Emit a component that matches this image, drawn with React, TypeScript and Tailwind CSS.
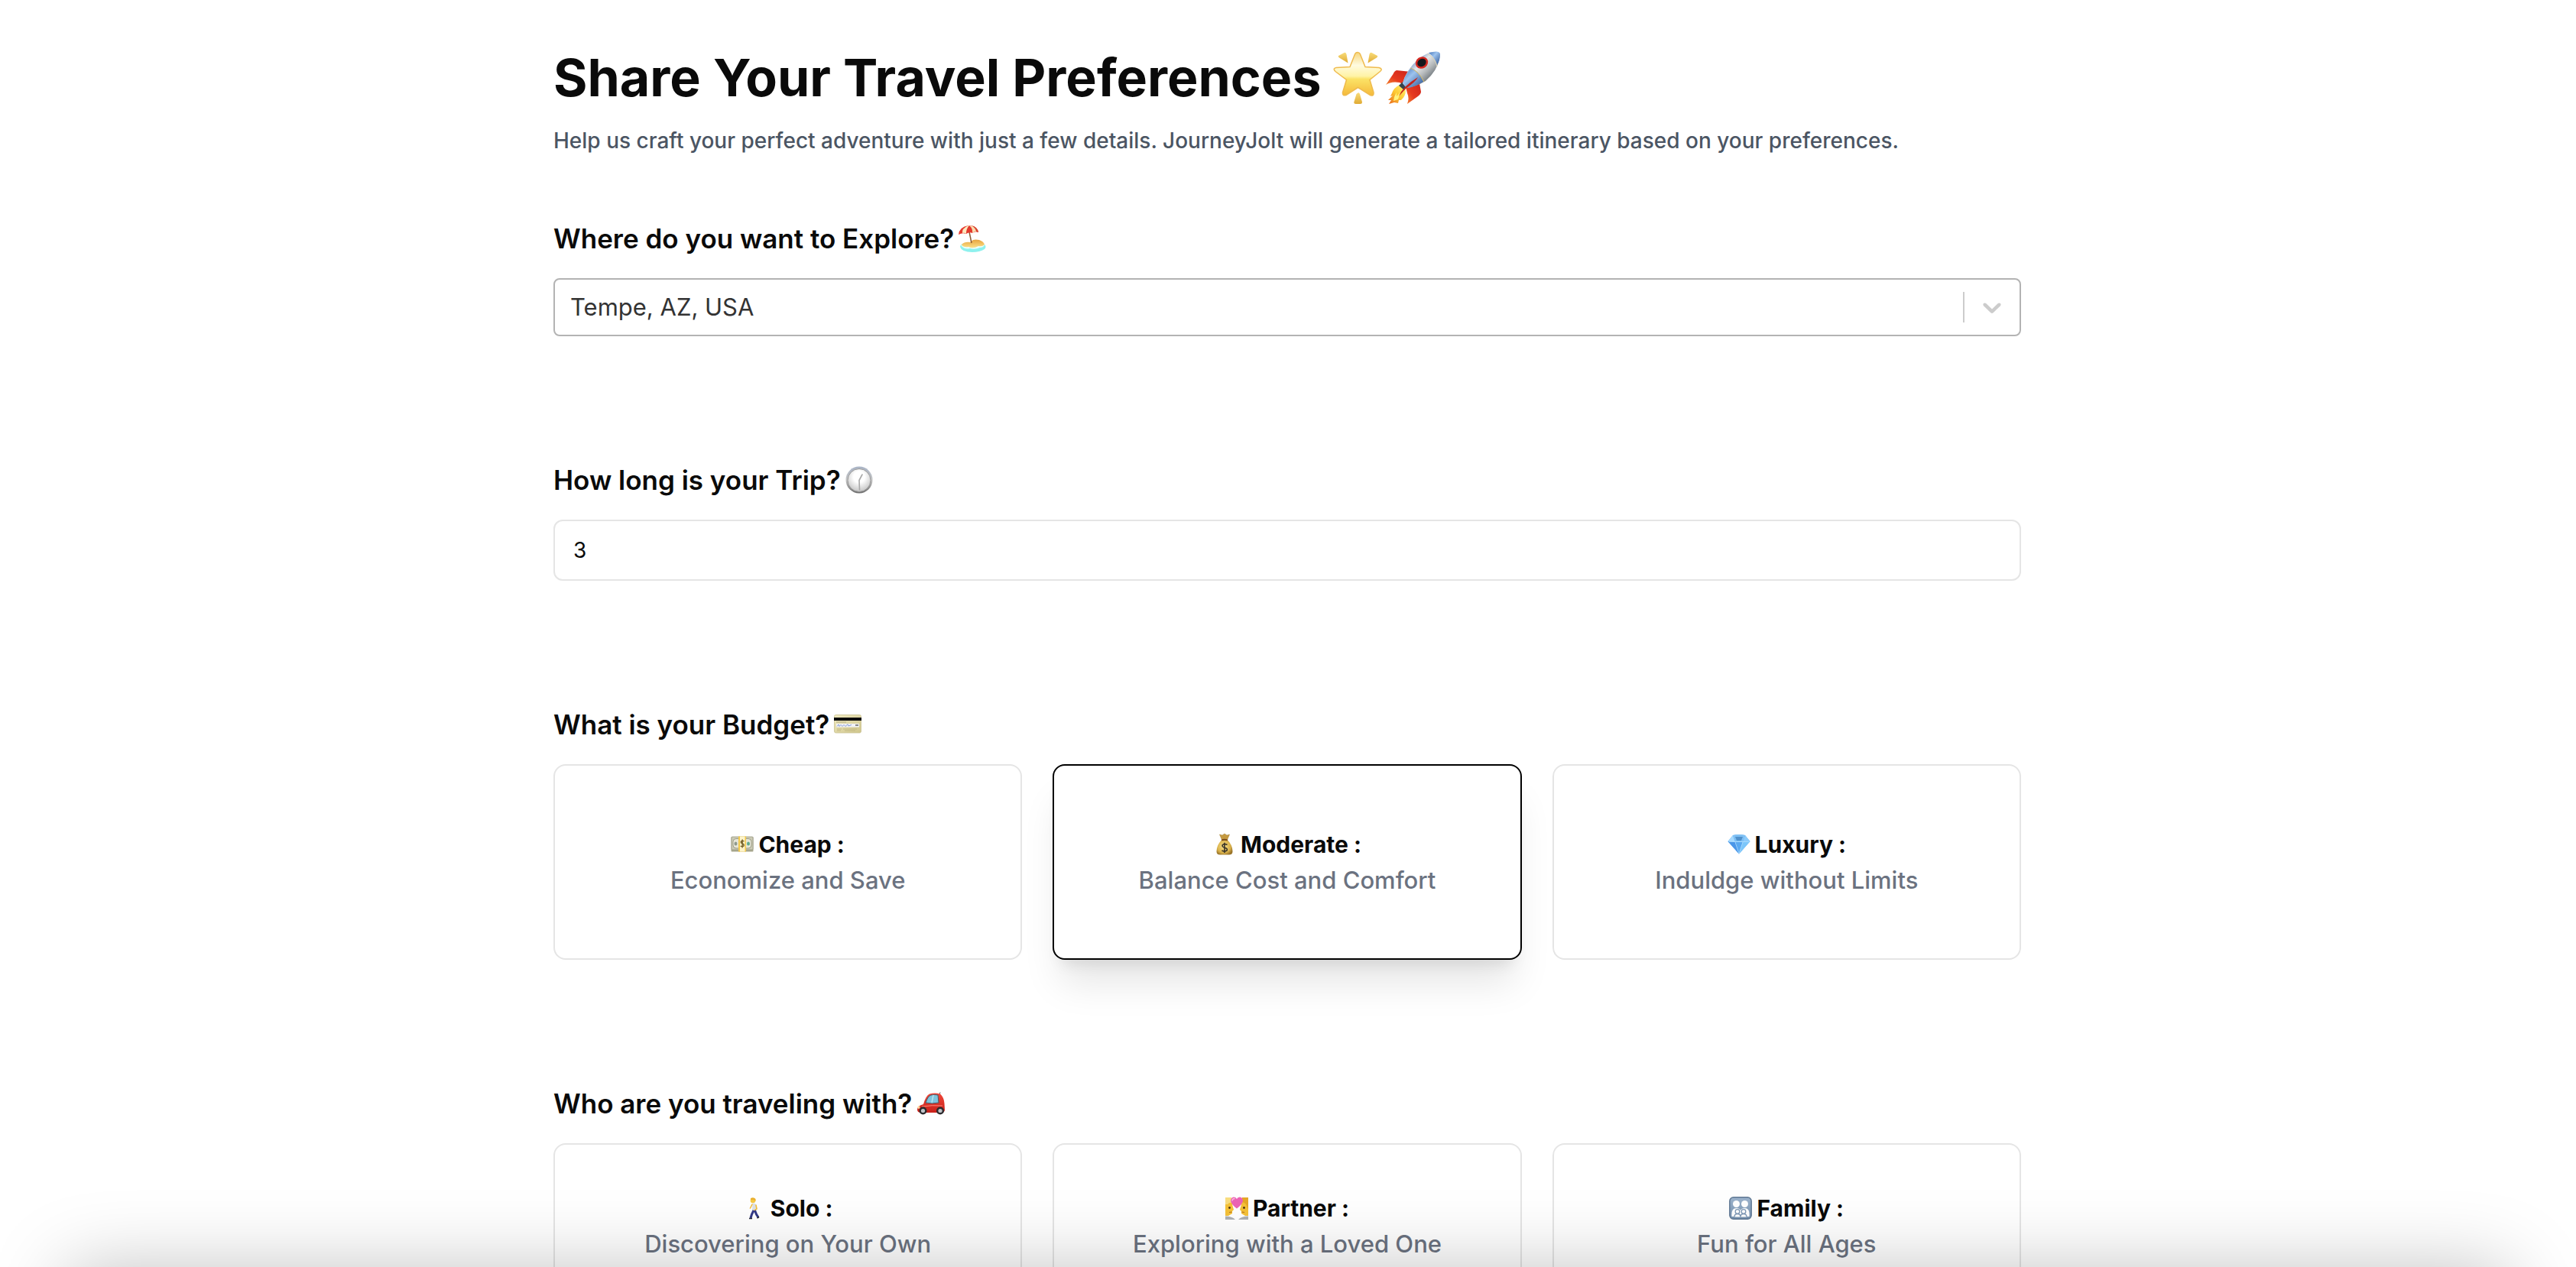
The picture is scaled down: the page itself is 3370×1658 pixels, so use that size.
import { useId, useState } from "react";
import type { ReactNode } from "react";

function Star() {
  return (
    <svg viewBox="0 0 72 72" className="size-[72px]" aria-hidden="true">
      <defs>
        <linearGradient id="star-fill" x1="0" y1="0" x2="0" y2="1">
          <stop offset="0" stopColor="#f6d67c" />
          <stop offset="0.3" stopColor="#fffbe0" />
          <stop offset="0.55" stopColor="#fff3a6" />
          <stop offset="0.62" stopColor="#fbe266" />
          <stop offset="1" stopColor="#f5b93a" />
        </linearGradient>
        <linearGradient id="star-ray" x1="0" y1="0" x2="0" y2="1">
          <stop offset="0" stopColor="#f8dc7a" />
          <stop offset="1" stopColor="#e0aa33" />
        </linearGradient>
      </defs>
      <path
        d="M36 3.500 Q38.500 3.500 39.500 6 L46 22.500 L64 23.500 Q69.500 25 65.500 28.500 L52 39.500 L57 56 Q57.500 61.500 52.500 59.500 L36.500 49.500 L21 59.500 Q16 61 16.500 56 L21.500 39.500 L7 28.500 Q3 24.500 8 23.500 L26 22.500 L32.500 6 Q33.500 3.500 36 3.500 Z"
        fill="url(#star-fill)"
        stroke="#efbb4e"
        strokeWidth="1.500"
      />
      <path d="M18.500 4 Q20.500 3 21.500 6 L23.500 17.500 L12 10.500 Q9.500 8.500 12 7.500 Z" fill="url(#star-ray)" />
      <path d="M54.500 4 Q52.500 3 51.500 6 L49.500 17.500 L61 10.500 Q63.500 8.500 61 7.500 Z" fill="url(#star-ray)" />
      <path d="M36.500 56.500 Q38 55.500 39 58 L42 68.500 Q42 71 39.500 71 L33.500 71 Q30.500 71 31.500 68 L34.500 58 Z" fill="url(#star-ray)" />
    </svg>
  );
}

function Rocket() {
  return (
    <svg viewBox="0 0 72 72" className="size-[72px]" aria-hidden="true">
      <defs>
        <linearGradient id="rocket-body" x1="0.250" y1="0.200" x2="0.800" y2="0.750">
          <stop offset="0" stopColor="#5c83bd" />
          <stop offset="0.350" stopColor="#e6e8ea" />
          <stop offset="0.650" stopColor="#b4b8ba" />
          <stop offset="1" stopColor="#626a70" />
        </linearGradient>
        <linearGradient id="rocket-blue" x1="0" y1="0" x2="1" y2="1">
          <stop offset="0" stopColor="#3f6fb5" />
          <stop offset="0.400" stopColor="#9dc3ee" />
          <stop offset="1" stopColor="#2a5191" />
        </linearGradient>
        <linearGradient id="rocket-fin" x1="1" y1="0" x2="0" y2="1">
          <stop offset="0" stopColor="#c9211a" />
          <stop offset="0.600" stopColor="#e63a20" />
          <stop offset="1" stopColor="#f5892f" />
        </linearGradient>
        <linearGradient id="rocket-flame" x1="1" y1="0" x2="0" y2="1">
          <stop offset="0" stopColor="#fff37a" />
          <stop offset="0.500" stopColor="#fdc931" />
          <stop offset="1" stopColor="#e8641c" />
        </linearGradient>
      </defs>
      <path d="M34 29 L15 27 Q12 28 10.500 32 L1 46 Q8 41 19 43 L25 46 Z" fill="url(#rocket-fin)" />
      <path d="M44 39 L47 55 Q47 58 43 61 L29 71 Q32 63 29 57 L27 49 Z" fill="url(#rocket-fin)" />
      <path d="M19 46 Q11 50 9 57 L7 61 L10 60 L4 66 L8 66 L5 71 L12 69 L17 70 L18 66 L21 66 Q27 61 27 53 Z" fill="url(#rocket-flame)" />
      <path d="M12 62 L15 56 L15 61 L20 56 L17 65 L11 67 Z" fill="#fff27d" />
      <path d="M18 47 L23 42 L29 48 L25 53 Z" fill="#36434d" />
      <path d="M23 44 Q27 27 44 12 Q56 2 68 3 Q73 4 71 12 Q68 28 53 41 Q39 49 28 50 Z" fill="url(#rocket-body)" />
      <path d="M57 4 Q72 0 72 6 Q72 14 68 20 Q66 11 57 4 Z" fill="url(#rocket-blue)" />
      <path d="M23 44 Q25 35 34 24 Q44 27 50 42 Q39 49 28 50 Z" fill="url(#rocket-blue)" />
      <path d="M33 24 Q44 28 51 42" fill="none" stroke="#d8b95e" strokeWidth="1" />
      <path d="M55 5 Q66 11 68 22" fill="none" stroke="#d8d2b4" strokeWidth="1" />
      <ellipse cx="48" cy="17" rx="8.500" ry="7.500" transform="rotate(-35 48 17)" fill="#d42a22" />
      <ellipse cx="48" cy="17" rx="6" ry="5" transform="rotate(-35 48 17)" fill="#15181c" />
      <path d="M43 36 Q40 42 27 51 L18 61 Q23 48 43 36 Z" fill="#c4241b" />
    </svg>
  );
}

function Beach() {
  return (
    <svg viewBox="0 0 36 36" className="size-9" aria-hidden="true">
      <defs>
        <linearGradient id="beach-sand" x1="0" y1="0" x2="0" y2="1">
          <stop offset="0" stopColor="#e8a43c" />
          <stop offset="1" stopColor="#fbe08a" />
        </linearGradient>
      </defs>
      <path d="M2 29 Q2 25 10 24 L34 26 Q37 29 34 32 Q28 36 18 36 Q4 36 2 29 Z" fill="#8ef1ee" />
      <path d="M3 27 Q8 33 15 31 Q22 33 28 30 Q33 30 34 26 L20 22 Z" fill="#eafffb" />
      <path d="M4 26 Q8 22 15 23 Q19 18 27 20 Q33 22 34 26 Q31 29 26 28 Q19 32 13 29 Q6 30 4 26 Z" fill="url(#beach-sand)" />
      <path d="M13.500 7 L17 24" stroke="#8b5a35" strokeWidth="1.500" />
      <path d="M0 13 Q1 3 13 1 Q24 1 26 10 Q22 8 18 11 Q14 9 10 12 Q5 10 0 13 Z" fill="#e5392d" />
      <path d="M13 1 Q4 5 5 11 Q8 10 10 12 Q10 5 14 1 Z" fill="#fbeac0" />
      <path d="M14 1 Q19 5 18 11 Q22 8 24 9 Q22 2 14 1 Z" fill="#f8deb0" />
      <path d="M17 1 Q25 3 26 10 L23 9 Q22 4 17 1 Z" fill="#d8452f" />
    </svg>
  );
}

function Clock() {
  return (
    <svg viewBox="0 0 36 36" className="size-9" aria-hidden="true">
      <defs>
        <linearGradient id="clock-rim" x1="0" y1="0" x2="0" y2="1">
          <stop offset="0" stopColor="#a9b4c6" />
          <stop offset="0.500" stopColor="#c4c4c4" />
          <stop offset="1" stopColor="#6b6b6b" />
        </linearGradient>
        <radialGradient id="clock-face" cx="0.500" cy="0.350" r="0.700">
          <stop offset="0.350" stopColor="#ffffff" />
          <stop offset="1" stopColor="#bdbdbd" />
        </radialGradient>
      </defs>
      <circle cx="18" cy="18" r="17.500" fill="url(#clock-rim)" />
      <circle cx="18" cy="18.500" r="15" fill="url(#clock-face)" stroke="#999999" strokeWidth="1" />
      <path d="M22 11 L18 18.500 L18.500 31" fill="none" stroke="#a8a8a8" strokeWidth="1.600" strokeLinecap="round" strokeLinejoin="round" />
    </svg>
  );
}

function CreditCard() {
  return (
    <svg viewBox="0 0 36 36" className="size-9" aria-hidden="true">
      <defs>
        <linearGradient id="card-fill" x1="0" y1="0" x2="1" y2="1">
          <stop offset="0" stopColor="#f0eac0" />
          <stop offset="1" stopColor="#cfc58b" />
        </linearGradient>
      </defs>
      <rect x="0.500" y="5.500" width="35" height="23.500" rx="2" fill="url(#card-fill)" stroke="#c9c192" strokeWidth="0.800" />
      <rect x="0" y="9" width="36" height="4" fill="#0b0b0b" />
      <path d="M3 15 H16" stroke="#a39d78" strokeWidth="0.800" />
      <rect x="3" y="17" width="30" height="4.500" fill="#f1f2f6" />
      <path d="M4 20.500 L6 18 L7 20.500 L9 18.500 L11 20.500 L13 18.500 L15 20.500 L18 17.800 L19 20 L23 18.500" fill="none" stroke="#7c92cf" strokeWidth="0.900" />
      <path d="M28 19 H32" stroke="#666666" strokeWidth="1.500" />
      <path d="M4 24 H10 M4 26 H9 M12 24 H30 M14 26 H28" stroke="#bdb37c" strokeWidth="0.800" />
    </svg>
  );
}

function Car() {
  return (
    <svg viewBox="0 0 38 36" className="h-9 w-[38px]" aria-hidden="true">
      <defs>
        <linearGradient id="car-body" x1="0" y1="0" x2="0" y2="1">
          <stop offset="0" stopColor="#f0483a" />
          <stop offset="1" stopColor="#c8201a" />
        </linearGradient>
      </defs>
      <path d="M30 6 L31 3.500" stroke="#555555" strokeWidth="1" />
      <path d="M9 19 Q12 8 17 5.500 Q24 3.500 31 5.500 Q36 10 36.500 18 L37 27 Q36 30 33 30 L6 30 Q1 30 1 26 Q1 21 9 19 Z" fill="url(#car-body)" />
      <path d="M12 17 Q15 8 19 7 Q24 6 28 7 L29 17 Q20 19 12 17 Z" fill="#7fc3dc" stroke="#4a5a66" strokeWidth="1" />
      <path d="M22 7 L20 17" stroke="#b7e4f0" strokeWidth="1.500" />
      <path d="M7 22 Q20 20 34 21" fill="none" stroke="#ff8a7a" strokeWidth="1" />
      <ellipse cx="3" cy="23" rx="1.500" ry="2" fill="#ffd9a0" />
      <circle cx="8.500" cy="27.500" r="5" fill="#2b2b2e" />
      <circle cx="8.500" cy="27.500" r="2.600" fill="#bfc3c8" />
      <circle cx="31" cy="27.500" r="5" fill="#2b2b2e" />
      <circle cx="31" cy="27.500" r="2.600" fill="#bfc3c8" />
    </svg>
  );
}

function Banknote() {
  return (
    <svg viewBox="0 0 30 30" className="size-[30px]" aria-hidden="true">
      <rect x="0.500" y="5" width="29" height="19.500" rx="1" fill="#a9a88f" />
      <rect x="1" y="5" width="28" height="17" rx="1" fill="#cccbb6" stroke="#9b9a84" strokeWidth="0.800" />
      <rect x="3" y="7.500" width="24" height="12.500" rx="4" fill="#e6e6d8" stroke="#9f9e88" strokeWidth="1" />
      <ellipse cx="6.500" cy="14" rx="2" ry="2.600" fill="#8f9a8c" />
      <ellipse cx="23" cy="14" rx="2" ry="2.600" fill="#5faa8c" />
      <rect x="10" y="4.500" width="10" height="20" fill="#f3c94a" />
      <rect x="12" y="4.500" width="6.500" height="20" fill="#fdf3c9" />
      <path d="M17.500 11 Q15 9.500 13.500 11 Q12.800 13.200 15.200 14 Q17.800 14.800 17 17 Q15 18.500 12.800 17 M15.200 8.500 V19.500" fill="none" stroke="#75612a" strokeWidth="1.400" />
    </svg>
  );
}

function MoneyBag() {
  return (
    <svg viewBox="0 0 30 30" className="size-[30px]" aria-hidden="true">
      <defs>
        <radialGradient id="bag-fill" cx="0.450" cy="0.450" r="0.600">
          <stop offset="0" stopColor="#f8e088" />
          <stop offset="0.700" stopColor="#d9b14a" />
          <stop offset="1" stopColor="#9a7429" />
        </radialGradient>
      </defs>
      <path d="M8.500 2 L12 3 L15 1 L18 3 L21.500 2 L18.500 9 L11.500 9 Z" fill="#c59a40" stroke="#a07a2c" strokeWidth="0.500" />
      <path d="M11 9.500 Q15 8 19 9.500 Q25 15 25.500 24 Q25.500 28.500 21 28.500 L9 28.500 Q4.500 28.500 4.500 24 Q5 15 11 9.500 Z" fill="url(#bag-fill)" />
      <path d="M11 9.500 Q15 8 19 9.500" fill="none" stroke="#7c4c1c" strokeWidth="1.800" />
      <path d="M18.500 15.500 Q15 13.500 12.500 15.500 Q11 18 15 19.200 Q19.500 20.500 18 23 Q15 25 11.500 23 M15 12.800 V26" fill="none" stroke="#363127" strokeWidth="1.600" />
    </svg>
  );
}

function Gem() {
  return (
    <svg viewBox="0 0 30 30" className="size-[30px]" aria-hidden="true">
      <path d="M7 3 Q15 1 23 3 L29.500 11 L15 27.500 L0.500 11 Z" fill="#68b4f4" />
      <path d="M7 3 L10 12 L0.500 11 Z" fill="#a6daff" />
      <path d="M23 3 L20 12 L29.500 11 Z" fill="#8bcbfb" />
      <path d="M7 3 Q15 1 23 3 L20 12 H10 Z" fill="#7fc0f4" />
      <path d="M10 5 L20 5 L18 10 L12 10 Z" fill="#4f91cc" />
      <path d="M10 12 H20 L15 27.500 Z" fill="#5aa9f0" />
      <path d="M0.500 11 L10 12 L15 27.500 Z" fill="#4a96e8" />
      <path d="M20 12 L29.500 11 L15 27.500 Z" fill="#7cc6fa" />
      <path d="M2 11.500 H28 M10 12 L15 27 L20 12" fill="none" stroke="#b8e3ff" strokeWidth="0.700" />
    </svg>
  );
}

function Walker() {
  return (
    <svg viewBox="0 0 30 30" className="size-[30px]" aria-hidden="true">
      <circle cx="13" cy="5" r="3.300" fill="#f7c944" />
      <path d="M10 2 Q14 0 16.500 3 L16.500 6 L14 4 L10 4 Z" fill="#eab02f" />
      <path d="M12.500 8.500 Q17 8 17.500 12 L17.500 18.500 L12 18.500 Z" fill="#dbe1e8" />
      <path d="M12 10 L9.500 15 M17 11 L18 16 L15 18" fill="none" stroke="#f3bd3b" strokeWidth="1.600" strokeLinecap="round" />
      <path d="M14 18 L11.500 23 L10 28 M15.500 18 L17.500 23 L20 27" fill="none" stroke="#333a87" strokeWidth="3" />
      <path d="M8 28.500 H12 M18.500 28 L21 26.500" stroke="#232632" strokeWidth="1.500" />
    </svg>
  );
}

function Couple() {
  return (
    <svg viewBox="0 0 30 30" className="size-[30px]" aria-hidden="true">
      <path d="M0 3 Q9 1 9.500 12 L11 17 L9 19 L9 22 L4 25 L0 25 Z" fill="#f5c237" />
      <path d="M30 3 Q21 1 20.500 12 L19 17 L21 19 L21 22 L26 25 L30 25 Z" fill="#f5c237" />
      <path d="M0 1 H8 Q10 4 9 8 Q5 7 3 10 L0 10 Z" fill="#f9dd80" />
      <path d="M30 1 H22 Q20 4 21 8 Q24 6 27 10 L30 17 Z" fill="#e6a827" />
      <circle cx="5.500" cy="14.500" r="1.400" fill="#4b3216" />
      <circle cx="24.500" cy="14.500" r="1.400" fill="#4b3216" />
      <path d="M5 20.500 L8.500 20 M25 20.500 L21.500 20" stroke="#b36c24" strokeWidth="1.200" />
      <path d="M0 25.500 Q9 25.500 13 30 H0 Z M30 25.500 Q21 25.500 17 30 H30 Z" fill="#aeb2b5" />
      <path d="M15 15.500 Q7 9.500 7 5 Q7.500 0.500 11.500 0.500 Q14 0.500 15 3 Q16 0.500 18.500 0.500 Q22.500 0.500 23 5 Q23 9.500 15 15.500 Z" fill="#ec63b6" />
      <path d="M9 5 Q9.500 2.500 12 2.500" fill="none" stroke="#fbb9df" strokeWidth="1.300" strokeLinecap="round" />
    </svg>
  );
}

function FamilySign() {
  return (
    <svg viewBox="0 0 30 30" className="size-[30px]" aria-hidden="true">
      <defs>
        <linearGradient id="family-fill" x1="0" y1="0" x2="0" y2="1">
          <stop offset="0" stopColor="#9db4cd" />
          <stop offset="1" stopColor="#7792b0" />
        </linearGradient>
      </defs>
      <rect x="0.800" y="0.800" width="28.400" height="28.400" rx="5" fill="url(#family-fill)" stroke="#5f7893" strokeWidth="1.400" />
      <circle cx="9.500" cy="9.500" r="4.500" fill="#ffffff" />
      <circle cx="20.500" cy="9.500" r="4.500" fill="#ffffff" />
      <path d="M3.500 26 Q2.500 15 9.500 15 Q14 15 15 18 Q16 15 20.500 15 Q27.500 15 26.500 26 Z" fill="#ffffff" />
      <circle cx="11" cy="19.500" r="2.800" fill="#ffffff" stroke="#7f99b6" strokeWidth="1.300" />
      <circle cx="19" cy="19.500" r="2.800" fill="#ffffff" stroke="#7f99b6" strokeWidth="1.300" />
      <path d="M7 26.500 Q7 22.500 11 22.500 Q15 22.500 15 26.500 Q15 22.500 19 22.500 Q23 22.500 23 26.500" fill="#ffffff" stroke="#7f99b6" strokeWidth="1.300" />
    </svg>
  );
}

type Option = { title: string; description: string; icon: ReactNode };

const budgets: Option[] = [
  { title: "Cheap :", description: "Economize and Save", icon: <Banknote /> },
  { title: "Moderate :", description: "Balance Cost and Comfort", icon: <MoneyBag /> },
  { title: "Luxury :", description: "Induldge without Limits", icon: <Gem /> },
];

const companions: Option[] = [
  { title: "Solo :", description: "Discovering on Your Own", icon: <Walker /> },
  { title: "Partner :", description: "Exploring with a Loved One", icon: <Couple /> },
  { title: "Family :", description: "Fun for All Ages", icon: <FamilySign /> },
];

const labelStyle = "mb-6 flex items-center gap-1.5 text-[35px] leading-[56px] font-semibold";

function OptionGroup({
  label,
  icon,
  options,
  initial,
  padding,
}: {
  label: string;
  icon: ReactNode;
  options: Option[];
  initial: string | null;
  padding: string;
}) {
  const [selected, setSelected] = useState(initial);
  const id = useId();
  return (
    <section role="group" aria-labelledby={id}>
      <h2 id={id} className={labelStyle}>
        {label}
        {icon}
      </h2>
      <div className="grid grid-cols-3 gap-10">
        {options.map((option) => (
          <button
            key={option.title}
            type="button"
            aria-pressed={selected === option.title}
            onClick={() => setSelected(option.title)}
            className={`cursor-pointer rounded-2xl border-2 bg-white px-8 text-center ${padding} ${
              selected === option.title
                ? "border-black shadow-[0_40px_50px_-10px_rgba(0,0,0,0.1),0_16px_20px_-12px_rgba(0,0,0,0.1)]"
                : "border-[#e5e5e5]"
            }`}
          >
            <span className="flex items-center justify-center gap-1.5 text-[30px] leading-[46px] font-bold">
              {option.icon}
              {option.title}
            </span>
            <span className="block text-[31px] leading-[48px] font-medium text-[#6b7280]">{option.description}</span>
          </button>
        ))}
      </div>
    </section>
  );
}

export default function App() {
  const [days, setDays] = useState("3");
  return (
    <div className="h-screen overflow-y-auto bg-white pr-0.5 font-[Inter,sans-serif] text-[#0a0a0a] [scrollbar-width:none]">
      <main className="mx-auto flex max-w-[1920px] flex-col gap-40 pt-15 pb-40">
        <div className="flex flex-col gap-20">
          <header>
            <h1 className="flex items-center text-[68px] leading-[82px] font-bold">
              <span className="mr-3">Share Your Travel Preferences</span>
              <Star />
              <Rocket />
            </h1>
            <p className="mt-[22px] text-[28px] leading-10 font-medium text-[#4b5563]">
              Help us craft your perfect adventure with just a few details. JourneyJolt will generate a tailored
              itinerary based on your preferences.
            </p>
          </header>
          <section>
            <label htmlFor="destination" className={labelStyle}>
              Where do you want to Explore?
              <Beach />
            </label>
            <div className="relative">
              <select
                id="destination"
                className="block h-19 w-full appearance-none rounded-lg border-2 border-[#b3b3b3] bg-white pr-24 pl-5 text-[31px] text-[#333333]"
              >
                <option>Tempe, AZ, USA</option>
              </select>
              <div className="pointer-events-none absolute inset-y-0 right-0 flex items-center pr-[18px]">
                <span className="h-10 w-0.5 bg-[#cccccc]" />
                <svg viewBox="0 0 20 20" className="ml-4 size-10" fill="#cccccc" aria-hidden="true">
                  <path d="M4.516 7.548c0.436-0.446 1.043-0.481 1.576 0l3.908 3.747 3.908-3.747c0.533-0.481 1.141-0.446 1.574 0 0.436 0.445 0.408 1.197 0 1.615-0.406 0.418-4.695 4.502-4.695 4.502-0.217 0.223-0.502 0.335-0.787 0.335s-0.570-0.112-0.789-0.335c0 0-4.287-4.084-4.695-4.502s-0.436-1.170 0-1.615z" />
                </svg>
              </div>
            </div>
          </section>
        </div>

        <section>
          <label htmlFor="days" className={labelStyle}>
            How long is your Trip?
            <Clock />
          </label>
          <input
            id="days"
            type="text"
            inputMode="numeric"
            value={days}
            onChange={(event) => setDays(event.target.value)}
            className="block h-20 w-full rounded-xl border-2 border-[#e5e5e5] px-6 text-[28px]"
          />
        </section>

        <OptionGroup label="What is your Budget?" icon={<CreditCard />} options={budgets} initial="Moderate :" padding="pt-20 pb-[78px]" />
        <OptionGroup label="Who are you traveling with?" icon={<Car />} options={companions} initial={null} padding="pt-15 pb-[58px]" />
      </main>
      <div className="pointer-events-none fixed inset-x-22 top-full h-64 shadow-[0_4px_100px_0_rgba(0,0,0,0.25)]" />
    </div>
  );
}
